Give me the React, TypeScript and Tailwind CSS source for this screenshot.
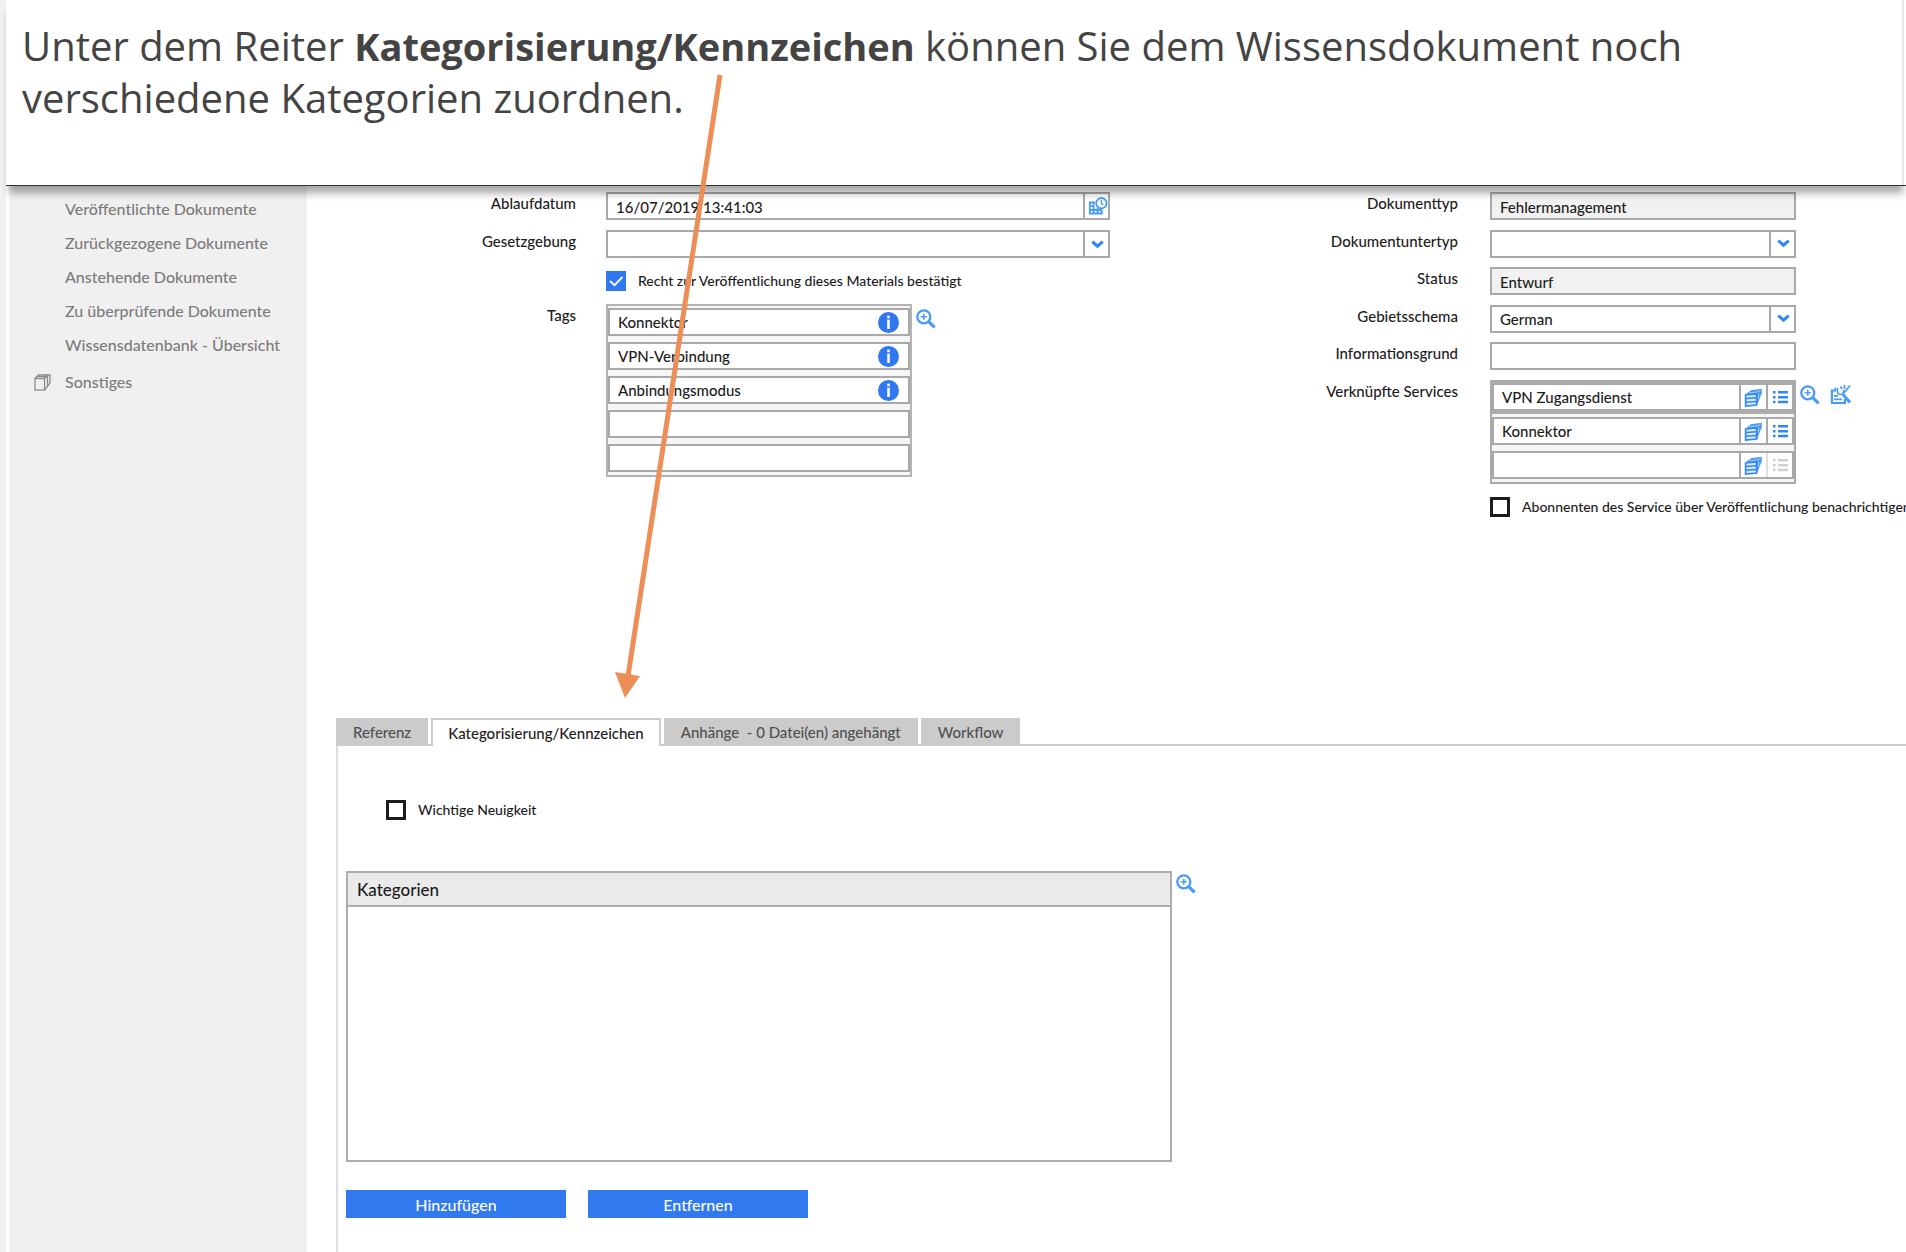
import { type ReactNode } from "react";

const BLUE = "#2f86f6";

function ZoomIcon() {
  return (
    <svg width="20" height="20" viewBox="0 0 20 20" fill="none" stroke="#4a9bf5" aria-hidden="true">
      <circle cx="7.8" cy="7.8" r="6.5" strokeWidth="2.3" />
      <path d="M12.4 12.4L18.6 18.4" strokeWidth="3.2" />
      <path d="M7.8 4.8v6M4.8 7.8h6" strokeWidth="1.6" />
    </svg>
  );
}

function InfoIcon() {
  return (
    <svg width="21" height="21" viewBox="0 0 21 21" aria-hidden="true">
      <circle cx="10.5" cy="10.5" r="10.5" fill="#2f78f0" />
      <rect x="9.2" y="3.6" width="2.6" height="2.6" fill="#fff" />
      <rect x="9.2" y="7.6" width="2.6" height="9.4" fill="#fff" />
    </svg>
  );
}

function CardsIcon() {
  return (
    <svg width="19" height="19" viewBox="0 0 19 19" aria-hidden="true">
      <path d="M2 6L7 2.2L17.8.8v4.4L13 17.2V6z" fill="#4a98f5" />
      <path d="M5 5l9-1.2L16.6 2M14.6 5.5v5.5" stroke="#a9d2fb" strokeWidth="1" fill="none" />
      <path d="M1.6 7L12.6 6v11l-11 1z" fill="#d8eafd" stroke={BLUE} strokeWidth="1.6" />
      <path d="M1.6 10.6l11-.8M1.6 14.2l11-.8" stroke={BLUE} strokeWidth="1.5" />
    </svg>
  );
}

function ListIcon({ color }: { color: string }) {
  return (
    <svg width="15" height="14" viewBox="0 0 15 14" fill={color} aria-hidden="true">
      <path d="M0 1h2.5v2.5H0zM5 1h10v2.5H5zM0 5.9h2.5v2.5H0zM5 5.9h10v2.5H5zM0 10.8h2.5v2.5H0zM5 10.8h10v2.5H5z" />
    </svg>
  );
}

function CalendarIcon() {
  return (
    <svg width="20" height="18" viewBox="0 0 20 18" fill="none" stroke="#4a9bf5" aria-hidden="true">
      <path d="M7 5.5H1.8v11h12V13M5.6 5v12M9.6 11v6M1.5 9.2h5M1.5 13h12.5" strokeWidth="1.8" />
      <circle cx="13.4" cy="6.2" r="5.2" strokeWidth="1.8" />
      <path d="M13.4 3v3.6l2 1.2" strokeWidth="1.4" />
    </svg>
  );
}

function WandIcon() {
  return (
    <svg width="21" height="21" viewBox="0 0 21 21" fill="none" stroke="#4a9bf5" aria-hidden="true">
      <path d="M5 6.500H1.9V19h13v-4" strokeWidth="2.2" />
      <path d="M5.400 3.500v4M4 15.400h8M4 11.800h4" strokeWidth="1.8" />
      <path d="M7.500 4v3.500a3 3 0 0 0 6 0V6" strokeWidth="1.6" />
      <path d="M13 10.500L20 18.500" strokeWidth="3" />
      <path d="M13 10L20 1.500M14.500 1v4M10.500 2.500L12 5" strokeWidth="1.800" />
    </svg>
  );
}

function StackIcon() {
  return (
    <svg width="17" height="17" viewBox="0 0 17 17" fill="none" stroke="#8a8a8a" strokeWidth="1.3" aria-hidden="true">
      <rect x="1" y="4.5" width="9.5" height="11.5" />
      <path d="M1 4.5L4.5 1H16v8l-5.500 7M10.500 4.500L14 1M3 2.700h10.500V12" />
    </svg>
  );
}

function Chevron() {
  return (
    <svg width="13" height="9" viewBox="0 0 13 9" fill="none" stroke={BLUE} strokeWidth="3" aria-hidden="true">
      <path d="M1.3 1.6L6.5 6.2l5.2-4.6" />
    </svg>
  );
}

function Row({ label, id, children }: { label: string; id: string; children: ReactNode }) {
  return (
    <div className="flex items-start">
      <label htmlFor={id} className="w-[269px] flex-none text-right leading-[22px]">
        {label}
      </label>
      <div className="ml-[30px] min-w-0 flex-1">{children}</div>
    </div>
  );
}

function RightRow({ label, id, children }: { label: string; id: string; children: ReactNode }) {
  return (
    <div className="flex items-start">
      <label htmlFor={id} className="min-w-0 flex-1 text-right leading-[22px]">
        {label}
      </label>
      <div className="ml-8 w-[306px] flex-none">{children}</div>
    </div>
  );
}

function TextField({ id, value = "", locked = false }: { id: string; value?: string; locked?: boolean }) {
  return (
    <input
      id={id}
      type="text"
      defaultValue={value}
      readOnly={locked}
      className="block h-[28px] w-full border-2 border-[#a9a9a9] bg-white px-2 pt-px outline-none read-only:bg-[#f1f1f1]"
    />
  );
}

function SelectField({ id, value = "" }: { id: string; value?: string }) {
  return (
    <div className="relative h-[28px]">
      <select
        id={id}
        defaultValue={value}
        className="block h-full w-full appearance-none border-2 border-[#a9a9a9] bg-white pl-2 pr-8 pt-px outline-none"
      >
        <option value={value}>{value}</option>
      </select>
      <span className="pointer-events-none absolute inset-y-0 right-0 flex w-[27px] items-center justify-center border-l-2 border-[#a9a9a9]">
        <Chevron />
      </span>
    </div>
  );
}

function Check({ id, label, checked = false }: { id: string; label: string; checked?: boolean }) {
  return (
    <div className="flex items-center">
      <span className="relative flex size-5 flex-none">
        <input
          id={id}
          type="checkbox"
          defaultChecked={checked}
          className="peer size-5 appearance-none border-[3px] border-[#1c1c1c] bg-white checked:border-[#2f78f0] checked:bg-[#2f78f0]"
        />
        <svg
          className="pointer-events-none absolute inset-0 hidden peer-checked:block"
          width="20"
          height="20"
          viewBox="0 0 20 20"
          fill="none"
          stroke="#fff"
          strokeWidth="1.8"
          aria-hidden="true"
        >
          <path d="M4 10l4.5 4.2L16.5 6" />
        </svg>
      </span>
      <label htmlFor={id} className="ml-3 whitespace-nowrap text-sm leading-5">
        {label}
      </label>
    </div>
  );
}

const navItems = [
  "Veröffentlichte Dokumente",
  "Zurückgezogene Dokumente",
  "Anstehende Dokumente",
  "Zu überprüfende Dokumente",
  "Wissensdatenbank - Übersicht",
];

const tags = ["Konnektor", "VPN-Verbindung", "Anbindungsmodus", "", ""];
const services = ["VPN Zugangsdienst", "Konnektor", ""];

const tabs = [
  { label: "Referenz", active: false },
  { label: "Kategorisierung/Kennzeichen", active: true },
  { label: "Anhänge  - 0 Datei(en) angehängt", active: false },
  { label: "Workflow", active: false },
];

export default function App() {
  return (
    <div className="relative flex min-h-screen flex-col overflow-hidden bg-white font-['Lato',sans-serif] text-[15px] font-medium text-[#1c1c1c]">
      <div className="flex flex-1 flex-col border-l-[6px] border-[#f2f2f2]">
        <header className="relative z-10 h-[186px] border-b border-[#333] bg-white pr-[2px] shadow-[0_10px_8px_-3px_rgba(0,0,0,0.35)]">
          <div className="h-full border-r-2 border-[#e6e6e6] pl-4 pt-5">
            <p className="max-w-[1720px] font-['Open_Sans',sans-serif] text-[40px] font-normal leading-[52px] text-[#444]">
              Unter dem Reiter <b className="text-[38px]">Kategorisierung/Kennzeichen</b> können Sie dem
              Wissensdokument noch
              <br />
              verschiedene Kategorien zuordnen.
            </p>
          </div>
        </header>

        <div className="flex flex-1">
          <nav className="ml-[3px] w-[298px] flex-none bg-[#f0f0f0] pt-[6px] text-base text-[#7c7c7c]">
            <ul>
              {navItems.map((item) => (
                <li key={item}>
                  <a href="#" className="block pl-14 leading-[34px]">
                    {item}
                  </a>
                </li>
              ))}
              <li className="mt-[3px]">
                <a href="#" className="flex items-center pl-[25px] leading-[34px]">
                  <StackIcon />
                  <span className="ml-[14px]">Sonstiges</span>
                </a>
              </li>
            </ul>
          </nav>

          <main className="flex min-w-0 flex-1 flex-col overflow-hidden">
            <form className="grid h-[532px] grid-cols-[minmax(0,803fr)_minmax(0,796fr)] items-start pt-[6px]">
              <section>
                <Row label="Ablaufdatum" id="ablauf">
                  <div className="relative">
                    <TextField id="ablauf" value="16/07/2019 13:41:03" />
                    <button
                      type="button"
                      aria-label="Datum wählen"
                      className="absolute inset-y-0 right-0 flex w-[27px] items-center justify-center border-l-2 border-[#a9a9a9]"
                    >
                      <CalendarIcon />
                    </button>
                  </div>
                </Row>
                <div className="mt-[10px]">
                  <Row label="Gesetzgebung" id="gesetz">
                    <SelectField id="gesetz" />
                  </Row>
                </div>
                <div className="ml-[299px] mt-[13px]">
                  <Check id="recht" label="Recht zur Veröffentlichung dieses Materials bestätigt" checked />
                </div>
                <div className="mt-[13px]">
                  <Row label="Tags" id="tag0">
                    <div className="flex items-start">
                      <div className="flex w-[306px] flex-col gap-[6px] border-2 border-[#b4b4b4] bg-[#f6f6f6] pb-[3px] pt-[2px]">
                        {tags.map((t, i) => (
                          <div key={i} className="flex h-7 items-center border-2 border-[#a9a9a9] bg-white">
                            <input
                              id={"tag" + i}
                              aria-label="Tag"
                              defaultValue={t}
                              className="min-w-0 flex-1 bg-transparent pl-2 pt-px outline-none"
                            />
                            {t && (
                              <button type="button" aria-label="Info" className="mr-[9px]">
                                <InfoIcon />
                              </button>
                            )}
                          </div>
                        ))}
                      </div>
                      <button type="button" aria-label="Tags suchen" className="ml-1 mt-[5px]">
                        <ZoomIcon />
                      </button>
                    </div>
                  </Row>
                </div>
              </section>

              <section className="pr-[110px]">
                <div className="flex h-[178px] flex-col justify-between">
                  <RightRow label="Dokumenttyp" id="typ">
                    <TextField id="typ" value="Fehlermanagement" locked />
                  </RightRow>
                  <RightRow label="Dokumentuntertyp" id="untertyp">
                    <SelectField id="untertyp" />
                  </RightRow>
                  <RightRow label="Status" id="status">
                    <TextField id="status" value="Entwurf" locked />
                  </RightRow>
                  <RightRow label="Gebietsschema" id="gebiet">
                    <SelectField id="gebiet" value="German" />
                  </RightRow>
                  <RightRow label="Informationsgrund" id="info">
                    <TextField id="info" />
                  </RightRow>
                </div>
                <div className="mt-[10px]">
                  <RightRow label="Verknüpfte Services" id="svc0">
                    <div className="relative">
                      <div className="border-2 border-[#a9a9a9] bg-[#f6f6f6]">
                        {services.map((s, i) => (
                          <div key={i} className={i === 0 ? "bg-[#adadad] pb-[3px] pt-px" : "pb-[3px] pt-[3px]"}>
                            <div className="flex h-7 border-2 border-[#a9a9a9] bg-white">
                              <input
                                id={"svc" + i}
                                aria-label="Service"
                                defaultValue={s}
                                className="min-w-0 flex-1 bg-transparent pl-2 outline-none"
                              />
                              <button
                                type="button"
                                aria-label="Datensatz öffnen"
                                className="flex w-[27px] items-center justify-center border-l-2 border-[#a9a9a9]"
                              >
                                <CardsIcon />
                              </button>
                              <button
                                type="button"
                                aria-label="Liste"
                                disabled={!s}
                                className="flex w-[26px] items-center justify-center border-l-2 border-[#a9a9a9] disabled:border-[#dedede]"
                              >
                                <ListIcon color={s ? BLUE : "#cfcfcf"} />
                              </button>
                            </div>
                          </div>
                        ))}
                      </div>
                      <div className="absolute left-full top-1 flex gap-[10px] pl-1">
                        <button type="button" aria-label="Services suchen">
                          <ZoomIcon />
                        </button>
                        <button type="button" aria-label="Services bearbeiten">
                          <WandIcon />
                        </button>
                      </div>
                    </div>
                    <div className="mt-[13px]">
                      <Check id="abo" label="Abonnenten des Service über Veröffentlichung benachrichtigen" />
                    </div>
                  </RightRow>
                </div>
              </section>
            </form>

            <div className="ml-[29px] flex flex-1 flex-col">
              <div role="tablist" className="flex gap-[3px] border-b-2 border-[#ccc]">
                {tabs.map((t) => (
                  <button
                    key={t.label}
                    type="button"
                    role="tab"
                    aria-selected={t.active}
                    className="h-[26px] whitespace-pre bg-[#cbcbcb] px-[17px] pt-[3px] text-[#505050] aria-selected:-mb-[2px] aria-selected:h-7 aria-selected:border-2 aria-selected:border-b-0 aria-selected:border-[#ccc] aria-selected:bg-white aria-selected:px-[15px] aria-selected:pt-0 aria-selected:text-[#1c1c1c]"
                  >
                    {t.label}
                  </button>
                ))}
              </div>
              <div role="tabpanel" className="flex-1 border-l-2 border-[#dedede] pl-2">
                <div className="ml-10 mt-[54px]">
                  <Check id="news" label="Wichtige Neuigkeit" />
                </div>
                <div className="mt-[51px] flex items-start">
                  <table className="h-[291px] w-[826px] border-collapse border-2 border-[#adadad]">
                    <thead>
                      <tr className="h-[34px]">
                        <th className="border-b-2 border-[#adadad] bg-[#eaeaea] px-[9px] pt-[2px] text-left text-[17px] font-medium leading-6">
                          Kategorien
                        </th>
                      </tr>
                    </thead>
                    <tbody>
                      <tr>
                        <td />
                      </tr>
                    </tbody>
                  </table>
                  <button type="button" aria-label="Kategorien suchen" className="ml-1 mt-[3px]">
                    <ZoomIcon />
                  </button>
                </div>
                <div className="mt-[28px] flex gap-[22px] pb-8 text-base text-white">
                  <button type="button" className="h-7 w-[220px] bg-[#3179ef] pt-px">
                    Hinzufügen
                  </button>
                  <button type="button" className="h-7 w-[220px] bg-[#3179ef] pt-px">
                    Entfernen
                  </button>
                </div>
              </div>
            </div>
          </main>
        </div>
      </div>

      <svg
        className="pointer-events-none absolute left-[612px] top-[70px] z-20"
        width="120"
        height="632"
        viewBox="0 0 120 632"
        aria-hidden="true"
      >
        <path d="M108 5L16 606" stroke="#ee8e57" strokeWidth="5" />
        <path d="M3 602L28 606L13 628z" fill="#ee8e57" />
      </svg>
    </div>
  );
}
